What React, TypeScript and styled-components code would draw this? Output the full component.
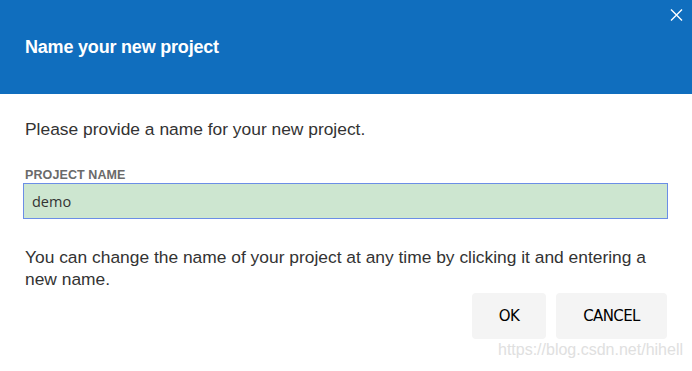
import React from 'react';
import styled, { createGlobalStyle } from 'styled-components';

const GlobalStyle = createGlobalStyle`
  html, body {
    margin: 0;
    padding: 0;
    background: #ffffff;
  }
  body {
    font-family: 'Liberation Sans', Arial, sans-serif;
  }
`;

const Dialog = styled.div`
  position: relative;
  width: 692px;
  height: 371px;
  background: #ffffff;
  overflow: hidden;
`;

const Header = styled.div`
  height: 94px;
  background: #106ebe;
  display: flex;
  align-items: center;
  padding: 0 25px;
  box-sizing: border-box;
`;

const Title = styled.h1`
  margin: 0;
  color: #ffffff;
  font-size: 18px;
  font-weight: 700;
  letter-spacing: -0.2px;
`;

const CloseButton = styled.button`
  position: absolute;
  top: 7px;
  right: 8px;
  width: 16px;
  height: 16px;
  padding: 0;
  border: none;
  background: transparent;
  display: flex;
  align-items: center;
  justify-content: center;
  cursor: pointer;
`;

const Body = styled.div`
  padding: 24px 24px 0 25px;
  color: #333333;
`;

const Text = styled.p<{ $mt?: number }>`
  margin: ${p => p.$mt ?? 0}px 0 0;
  font-size: 17.4px;
  line-height: 22px;
`;

const Label = styled.label`
  display: block;
  margin-top: 28px;
  font-size: 12.5px;
  line-height: 14px;
  font-weight: 700;
  color: #6a6a6a;
  letter-spacing: 0.1px;
`;

const Input = styled.input`
  display: block;
  box-sizing: border-box;
  width: 645px;
  height: 36px;
  margin: 1px 0 0 -2px;
  padding: 0 8px;
  background: #cde6d0;
  border: 1px solid #6b8ee6;
  font-family: 'Open Sans', 'Noto Sans', sans-serif;
  font-size: 14.5px;
  color: #333333;
  outline: none;
`;

const Actions = styled.div`
  display: flex;
  justify-content: flex-end;
  gap: 10px;
  margin-top: 3px;
  padding-right: 1px;
`;

const Button = styled.button<{ $w: number }>`
  width: ${p => p.$w}px;
  height: 46px;
  border: none;
  border-radius: 4px;
  background: #f4f4f4;
  color: #000000;
  font-family: 'DejaVu Sans', 'Liberation Sans', sans-serif;
  font-size: 15px;
  letter-spacing: -0.6px;
  cursor: pointer;
`;

const Watermark = styled.span`
  position: absolute;
  right: 9px;
  bottom: 12px;
  color: #e0e0e0;
  font-size: 16px;
  pointer-events: none;
`;

const App = (): JSX.Element => (
  <>
    <GlobalStyle />
    <Dialog>
      <Header>
        <Title>Name your new project</Title>
      </Header>
      <CloseButton aria-label="close">
        <svg width="13" height="14" viewBox="0 0 13 14">
          <path d="M1 1.5 L12 12.5 M12 1.5 L1 12.5" stroke="#ffffff" strokeWidth="1.4" fill="none" />
        </svg>
      </CloseButton>
      <Body>
        <Text>Please provide a name for your new project.</Text>
        <Label htmlFor="project-name">PROJECT NAME</Label>
        <Input id="project-name" defaultValue="demo" />
        <Text $mt={27}>
          You can change the name of your project at any time by clicking it and entering a new name.
        </Text>
        <Actions>
          <Button $w={74}>OK</Button>
          <Button $w={111}>CANCEL</Button>
        </Actions>
      </Body>
      <Watermark>https://blog.csdn.net/hihell</Watermark>
    </Dialog>
  </>
);

export default App;
